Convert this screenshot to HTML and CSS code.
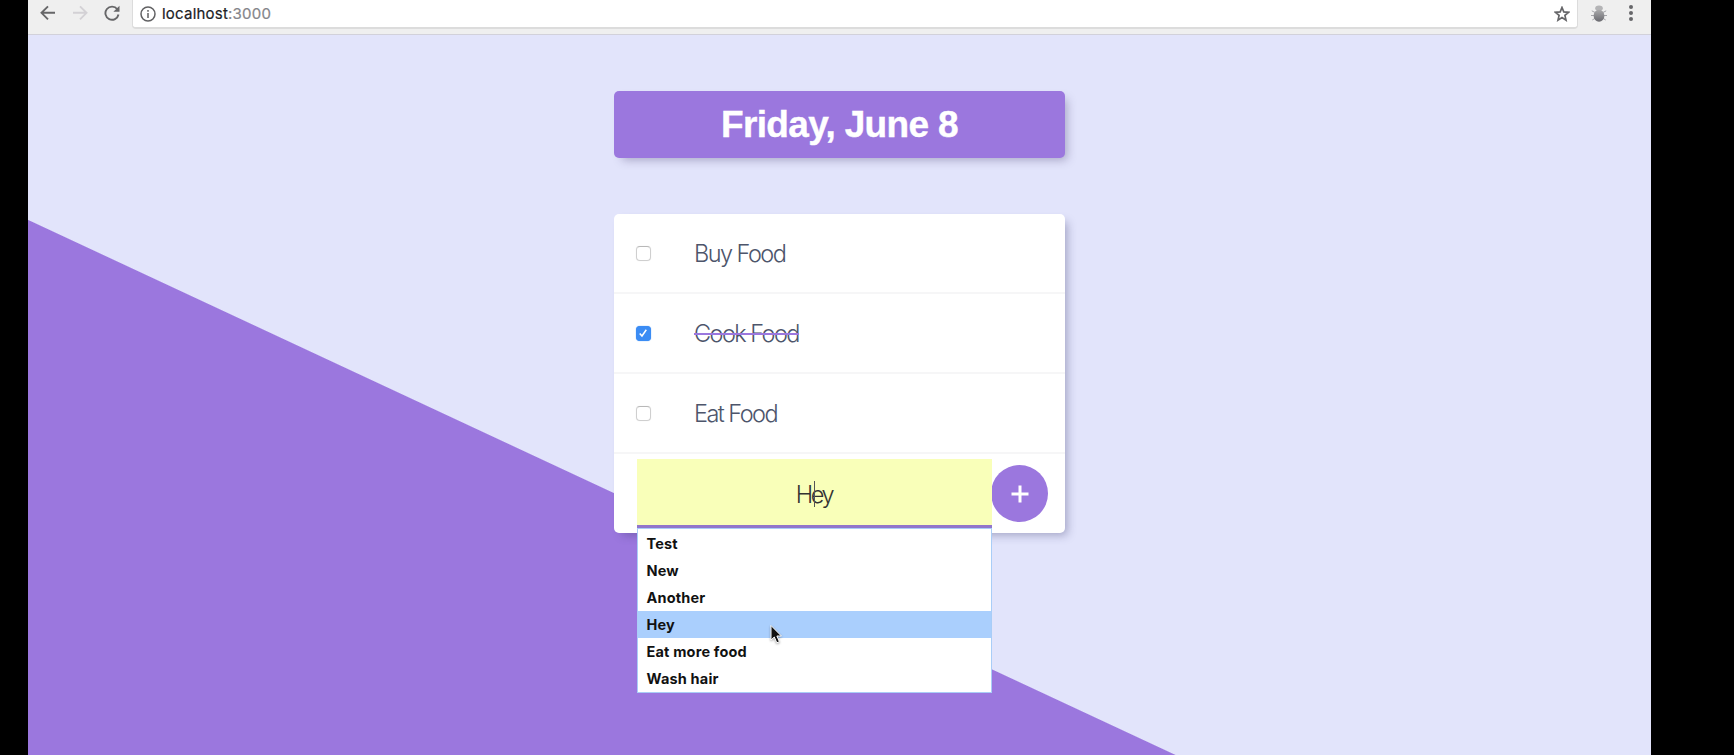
FILE: index.html
```html
<!DOCTYPE html>
<html lang="en">
<head>
<meta charset="utf-8">
<title>Todo List</title>
<link rel="stylesheet" href="styles.css">
</head>
<body>
<div class="browser">
  <header class="toolbar">
    <nav class="nav">
      <svg width="16" height="16" viewBox="0 0 16 16" class="ico"><path d="M15 7.8H1.6M8 1.3 1.5 7.8 8 14.3"/></svg>
      <svg width="16" height="16" viewBox="0 0 16 16" class="ico off"><path d="M1 7.8h13.4M8 1.3l6.500 6.500L8 14.300"/></svg>
      <svg width="16" height="16" viewBox="0 0 16 16" class="ico"><path d="M13.300 4.200A6.600 6.600 0 1 0 14.500 9.500"/><path class="solid" d="M15.500 0.700V6.800H9.400Z"/></svg>
    </nav>
    <div class="address">
      <svg width="16" height="16" viewBox="0 0 16 16" class="info"><circle cx="8" cy="8" r="7"/><path d="M8 7v5M8 4v1.700"/></svg>
      <span class="url">localhost<span class="port">:3000</span></span>
      <svg width="16" height="16" viewBox="0 0 16 16" class="star"><path d="M8 1.500l1.800 4.400 4.700.4-3.600 3.100 1.100 4.700L8 11.600 4 14.100l1.100-4.700L1.500 6.300l4.700-.4Z"/></svg>
    </div>
    <svg width="16" height="18" viewBox="0 0 16 18" class="bug">
      <defs><linearGradient id="shell" x1="0" y1="0" x2="0" y2="1"><stop offset="0" stop-color="#aaaaac"/><stop offset="1" stop-color="#69696f"/></linearGradient></defs>
      <path class="legs" d="M4 7.500.8 5.800M4 10.500H0M4.500 13l-3.200 2M12 7.500l3.200-1.700M12 10.500h4M11.500 13l3.200 2"/>
      <ellipse cx="8" cy="3.300" rx="3.800" ry="2.800" fill="#b4b4b6"/>
      <ellipse cx="8" cy="10.800" rx="5.400" ry="6" fill="url(#shell)"/>
    </svg>
    <svg width="6" height="18" viewBox="0 0 6 18" class="dots"><circle cx="3" cy="3" r="2"/><circle cx="3" cy="9" r="2"/><circle cx="3" cy="15" r="2"/></svg>
  </header>
  <main class="page">
    <h1 class="heading">Friday, June 8</h1>
    <section class="list">
      <div class="item"><span class="check"></span><p>Buy Food</p></div>
      <div class="item done"><span class="check"><svg width="14" height="14" viewBox="0 0 14 14"><path d="M3.700 7.400 6 10 10.300 3.800"/></svg></span><p>Cook Food</p></div>
      <div class="item"><span class="check"></span><p>Eat Food</p></div>
      <form class="add">
        <div class="field">
          <span class="value">H<i class="caret"></i>ey</span>
          <ul class="suggest">
            <li>Test</li>
            <li>New</li>
            <li>Another</li>
            <li class="active">Hey</li>
            <li>Eat more food</li>
            <li>Wash hair</li>
          </ul>
        </div>
        <div class="plus"><svg width="18" height="18" viewBox="0 0 18 18"><path d="M9 .5v17M.5 9h17"/></svg></div>
      </form>
    </section>
  </main>
  <svg class="pointer" width="16" height="22" viewBox="0 0 16 22"><path d="M2 1.500V16l3.300-3 2.500 5.800 2.600-1.100L7.900 12h4.500Z"/></svg>
</div>
</body>
</html>
```

FILE: styles.css
```css
* { box-sizing: border-box; }
body { margin: 0; background: #000; font-family: Inter, "Liberation Sans", sans-serif; }
.browser {
  position: relative;
  width: 1623px;
  height: 755px;
  margin-left: 28px;
  overflow: hidden;
  display: flex;
  flex-direction: column;
}
.toolbar {
  height: 35px;
  background: #efefef;
  border-bottom: 1px solid #d2d1da;
  display: flex;
  align-items: flex-start;
}
.toolbar > * { flex: none; }
.nav { display: flex; gap: 16px; width: 104px; padding: 5px 0 0 12px; }
.ico { fill: none; stroke: #666668; stroke-width: 1.9; }
.ico.off { stroke: #d3d1d5; }
.ico .solid { fill: #666668; stroke: none; }
.address {
  width: 1446px;
  height: 29px;
  padding: 0 7px 0 7px;
  background: #fff;
  border: 1px solid #dcdcdc;
  border-top: 0;
  border-bottom-width: 2px;
  border-radius: 0 0 4px 4px;
  display: flex;
  align-items: center;
}
.info { fill: none; stroke: #616163; stroke-width: 1.5; }
.url { margin-left: 6px; font: 15px/27px Inter, sans-serif; letter-spacing: .22px; color: #202124; -webkit-text-stroke: .2px; }
.port { color: #85858a; }
.star { margin-left: auto; fill: none; stroke: #666669; stroke-width: 1.7; }
.bug { margin: 5px 0 0 13px; }
.legs { fill: none; stroke: #a5a5aa; stroke-width: 1; }
.dots { margin: 4px 0 0 21px; fill: #666669; }
.page {
  flex: 1;
  padding-top: 56px;
  background: linear-gradient(25deg, #9b77de 484.5px, #e2e4fb 485.5px);
  display: flex;
  flex-direction: column;
  align-items: center;
}
.heading {
  width: 451px;
  height: 67px;
  margin: 0 0 56px;
  border-radius: 5px;
  background: #9b77de;
  box-shadow: 5px 5px 10px -3px rgba(60, 50, 100, .35);
  color: #fff;
  font: bold 37px/68px "Liberation Sans", sans-serif;
  letter-spacing: -.65px;
  text-align: center;
  -webkit-text-stroke: .4px #fff;
}
.list {
  width: 451px;
  height: 319px;
  border-radius: 5px;
  background: #fff;
  box-shadow: 5px 5px 10px -3px rgba(60, 60, 110, .4);
}
.item { height: 80px; padding: 0 22px; border-bottom: 2px solid #f6f6f7; display: flex; align-items: center; }
.item p { margin: 0 0 0 43px; font-size: 23.500px; font-weight: 300; letter-spacing: -1.550px; color: #4d556b; }
.item.done p { text-decoration: line-through #9b77de 2px; }
.check { width: 15px; height: 15px; border: 1px solid #cfcfcf; border-top-color: #b8b8b8; border-radius: 4px; box-shadow: 0 0 1px #ddd; }
.done .check { border: 0; background: #3b8cf4; box-shadow: 0 0 1px #3b8cf4; }
.check svg { display: block; fill: none; stroke: #fff; stroke-width: 1.5; }
.add { display: flex; align-items: center; padding: 5px 0 0 22.500px; }
.field {
  position: relative;
  width: 355px;
  height: 70px;
  background: #f9ffb9;
  border-bottom: 4px solid #9176cb;
  display: flex;
  align-items: center;
  justify-content: center;
}
.value { padding-top: 5px; font-size: 23.500px; font-weight: 300; letter-spacing: -2.300px; color: #333; }
.caret { display: inline-block; position: relative; width: 0; }
.caret::after { content: ""; position: absolute; left: 3px; bottom: -4px; width: 1.500px; height: 26px; background: #555; }
.suggest {
  position: absolute;
  top: 69px;
  left: 0;
  width: 355px;
  height: 165px;
  margin: 0;
  padding: 1px 0 0;
  list-style: none;
  background: #fff;
  border: 1px solid #a9cdf7;
}
.suggest li { height: 27px; padding-left: 9px; font-size: 14.500px; font-weight: 700; line-height: 28px; letter-spacing: .18px; color: #111; }
.suggest .active { background: #aacffd; }
.plus { width: 57px; height: 57px; margin: -1px 0 0 -.5px; border-radius: 50%; background: #9b77de; display: grid; place-items: center; }
.plus svg { stroke: #fff; stroke-width: 3; }
.pointer { position: absolute; left: 741px; top: 624px; fill: #111; stroke: #fff; stroke-width: 1; filter: drop-shadow(0 1px 1px rgba(0, 0, 0, .35)); }
```
